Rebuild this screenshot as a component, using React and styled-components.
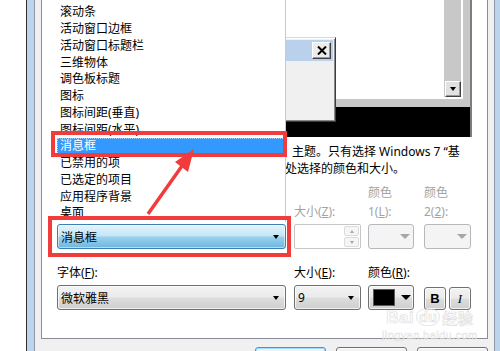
import React from "react";
import styled, { createGlobalStyle, css } from "styled-components";

const Global = createGlobalStyle`
  html, body { margin: 0; padding: 0; background: #fff; }
  body {
    font-family: "Noto Sans", "Noto Sans CJK SC", sans-serif;
    font-size: 12px;
    color: #000;
  }
  * { box-sizing: border-box; }
`;

const Screen = styled.div`
  position: relative;
  width: 500px;
  height: 351px;
  overflow: hidden;
  background: #fff;
  display: flex;
  padding-left: 26px;
`;

const WindowFrame = styled.div`
  flex-shrink: 0;
  display: flex;
  height: 100%;
  border-left: 1px solid #2e2e2e;
  border-right: 1px solid #2e2e2e;
  background: #bcd4ec;
  padding: 0 7px;
`;

const DialogBody = styled.div`
  display: flex;
  flex-direction: column;
  border-left: 1px solid #8d99a8;
  border-right: 1px solid #8d99a8;
  background: #f0f0f0;
  padding: 0 6px;
`;

const Panel = styled.div`
  width: 447px;
  display: flex;
  flex-direction: column;
  background: #fff;
  border: 1px solid #898c95;
  border-top: none;
  padding: 0 15px 28px;
`;

/* ---------- preview ---------- */
const PreviewBox = styled.div`
  position: relative;
  flex-shrink: 0;
  height: 137px;
  background: #000;
  border-right: 2px solid #7d7d7d;
  overflow: hidden;
`;

const PreviewWindow = styled.div`
  position: absolute;
  left: 24px;
  top: -60px;
  right: 0;
  bottom: 30px;
  display: flex;
  background: #c8c8c8;
  padding: 8px 7px 8px 8px;
`;

const WindowInner = styled.div`
  flex: 1;
  display: flex;
  border-right: 2px solid #fff;
  border-bottom: 2px solid #fff;
`;

const ClientArea = styled.div`
  flex: 1;
  background: #fff;
`;

const Scrollbar = styled.div`
  width: 17px;
  display: flex;
  flex-direction: column;
  justify-content: flex-end;
  background: #c8c8c8;
  padding-left: 1px;
`;

const ScrollButton = styled.div`
  height: 16px;
  display: flex;
  align-items: center;
  justify-content: center;
  background: #e2e2e2;
  border: 1px solid;
  border-color: #fff #404040 #404040 #fff;
  box-shadow: inset -1px -1px #9a9a9a;
`;

const MessageBox = styled.div`
  position: absolute;
  top: 37px;
  right: 134px;
  width: 150px;
  height: 85px;
  display: flex;
  flex-direction: column;
  background: #f0f0f0;
  border: 1px solid;
  border-color: #dadada #3c3c3c #3c3c3c #dadada;
  box-shadow: inset 1px 1px #fff, inset -1px -1px #8a8a8a;
  padding: 2px;
`;

const TitleBar = styled.div`
  height: 21px;
  display: flex;
  align-items: center;
  justify-content: flex-end;
  background: #b9d1ea;
  padding: 0 2px 0 4px;
`;

const CloseBox = styled.div`
  width: 19px;
  height: 17px;
  display: flex;
  align-items: center;
  justify-content: center;
  background: #ececec;
  border: 1px solid;
  border-color: #fff #404040 #404040 #fff;
  box-shadow: inset -1px -1px #9a9a9a;
`;

const MsgBody = styled.div`
  flex: 1;
`;

/* ---------- description ---------- */
const Description = styled.div`
  margin-top: 6px;
  line-height: 17px;
`;

const DescLine = styled.div`
  height: 17px;
  white-space: nowrap;
  overflow: hidden;
  padding-left: ${(p) => p.$lead}px;
`;

/* ---------- controls ---------- */
const ControlRow = styled.div`
  display: grid;
  grid-template-columns: 237px 74px 56px 47px;
  align-items: end;
  margin-top: ${(p) => p.$gap}px;
`;

const Field = styled.div`
  display: flex;
  flex-direction: column;
  gap: 3px;
`;

const Label = styled.div`
  line-height: 19px;
  white-space: nowrap;
  color: ${(p) => (p.$disabled ? "#a3a3a3" : "#000")};
  u { text-underline-offset: 1px; }
`;

const grayFace = css`
  border: 1px solid #707070;
  background: linear-gradient(#f3f3f3 0%, #ebebeb 48%, #dddddd 52%, #cfcfcf 100%);
  box-shadow: inset 0 0 0 1px rgba(255, 255, 255, 0.7);
`;

const comboVariants = {
  focus: css`
    border: 1px solid #3c7fb1;
    background: linear-gradient(#e5f4fc 0%, #c4e5f6 48%, #98d1ef 52%, #6fb6de 100%);
    box-shadow: inset 0 0 0 1px rgba(255, 255, 255, 0.5);
  `,
  normal: grayFace,
  disabled: css`
    border: 1px solid #b6b9bc;
    background: #f4f4f4;
  `,
};

const Combo = styled.div`
  position: relative;
  width: ${(p) => p.$width}px;
  height: 25px;
  display: flex;
  align-items: center;
  justify-content: space-between;
  padding: 0 ${(p) => p.$padRight ?? 6}px 0 3px;
  border-radius: 3px;
  ${(p) => comboVariants[p.$variant || "normal"]}
`;

const Tri = styled.span`
  display: block;
  width: 0;
  height: 0;
  border-left: ${(p) => p.$w / 2}px solid transparent;
  border-right: ${(p) => p.$w / 2}px solid transparent;
  ${(p) => (p.$up ? "border-bottom" : "border-top")}: ${(p) => p.$h}px solid
    ${(p) => p.$color || "#000"};
`;

const DropList = styled.ul`
  position: absolute;
  left: -1px;
  bottom: calc(100% + 3px);
  width: 229px;
  margin: 0;
  padding: 6px 0 0;
  list-style: none;
  background: #fff;
  border-right: 1px solid #c7c9d3;
  z-index: 5;
`;

const DropItem = styled.li`
  height: 16.75px;
  line-height: 16.75px;
  padding-left: 3px;
  white-space: nowrap;
  ${(p) =>
    p.$selected &&
    css`
      background: #3399ff;
      color: #fff;
      outline: 1px dotted rgba(255, 255, 255, 0.55);
      outline-offset: -1px;
    `}
`;

const SpinBox = styled.div`
  width: 67px;
  height: 25px;
  display: flex;
  justify-content: flex-end;
  background: #fff;
  border: 1px solid #c4c6c9;
  border-radius: 2px;
  padding: 1px;
`;

const SpinButtons = styled.div`
  width: 15px;
  display: flex;
  flex-direction: column;
  gap: 1px;
`;

const SpinBtn = styled.div`
  flex: 1;
  display: flex;
  align-items: center;
  justify-content: center;
  background: #f5f5f5;
  border: 1px solid #dcdcdc;
  border-radius: 2px;
`;

const ColorButton = styled.div`
  width: 46px;
  height: 25px;
  display: flex;
  align-items: center;
  justify-content: space-between;
  padding: 0 2px 0 4px;
  border-radius: 3px;
  ${grayFace}
`;

const Swatch = styled.span`
  width: 22px;
  height: 17px;
  background: #000;
  border: 1px solid #5a5a5a;
`;

const ToggleGroup = styled.div`
  display: flex;
  gap: 3px;
`;

const ToolButton = styled.div`
  width: 22px;
  height: 23px;
  display: flex;
  align-items: center;
  justify-content: center;
  border-radius: 3px;
  ${grayFace}
  font-family: ${(p) => (p.$italic ? '"Liberation Serif", serif' : '"Liberation Sans", sans-serif')};
  font-weight: ${(p) => (p.$italic ? 400 : 700)};
  font-style: ${(p) => (p.$italic ? "italic" : "normal")};
  font-size: 13px;
`;

/* ---------- dialog buttons ---------- */
const ButtonRow = styled.div`
  display: flex;
  justify-content: flex-end;
  gap: 10px;
  margin-top: 8px;
`;

const DialogButton = styled.div`
  width: 71px;
  height: 23px;
  flex-shrink: 0;
  display: flex;
  align-items: center;
  justify-content: center;
  border-radius: 3px;
  ${grayFace}
  ${(p) =>
    p.$default &&
    css`
      border-color: #3399ff;
      box-shadow: inset 0 0 0 1px #9fdcff;
    `}
`;

/* ---------- overlays: annotation + watermark ---------- */
const RedMark = styled.div`
  position: absolute;
  left: ${(p) => p.$x}px;
  top: ${(p) => p.$y}px;
  width: ${(p) => p.$w}px;
  height: ${(p) => p.$h}px;
  border: 4px solid #f23c3c;
  z-index: 10;
`;

const ArrowSvg = styled.svg`
  position: absolute;
  left: 140px;
  top: 144px;
  z-index: 10;
`;

const Watermark = styled.div`
  position: absolute;
  left: 382px;
  top: 308px;
  display: flex;
  flex-direction: column;
  align-items: center;
  color: #fff;
  z-index: 8;
  opacity: 0.8;
`;

const WmBrand = styled.div`
  display: flex;
  align-items: center;
  font-family: "Liberation Sans", sans-serif;
  font-weight: 700;
  font-size: 17px;
  line-height: 19px;
  -webkit-text-stroke: 0.7px #d8d8d8;
  letter-spacing: 0.5px;
`;

const WmPaw = styled.span`
  border: 1.5px solid #e0e0e0;
  border-radius: 8px 8px 10px 10px;
  padding: 0 2px;
  margin: 0 2px;
  font-size: 14px;
  line-height: 15px;
`;

const WmCjk = styled.span`
  font-family: "Noto Sans CJK SC", sans-serif;
  font-size: 15px;
`;

const WmUrl = styled.div`
  font-family: "Liberation Sans", sans-serif;
  font-size: 11px;
  line-height: 12px;
  letter-spacing: 0.4px;
  color: #fff;
  -webkit-text-stroke: 0.5px #dadada;
  margin-top: 2px;
`;

const items = [
  "滚动条",
  "活动窗口边框",
  "活动窗口标题栏",
  "三维物体",
  "调色板标题",
  "图标",
  "图标间距(垂直)",
  "图标间距(水平)",
  "消息框",
  "已禁用的项",
  "已选定的项目",
  "应用程序背景",
  "桌面",
];

export default function App() {
  return (
    <>
      <Global />
      <Screen>
        <WindowFrame>
          <DialogBody>
            <Panel>
              <PreviewBox>
                <PreviewWindow>
                  <WindowInner>
                    <ClientArea />
                    <Scrollbar>
                      <ScrollButton>
                        <Tri $w={7} $h={4} />
                      </ScrollButton>
                    </Scrollbar>
                  </WindowInner>
                </PreviewWindow>
                <MessageBox>
                  <TitleBar>
                    <CloseBox>
                      <svg width="10" height="9" viewBox="0 0 10 9">
                        <path d="M1 0.5 L9 8.5 M9 0.5 L1 8.5" stroke="#000" strokeWidth="2" />
                      </svg>
                    </CloseBox>
                  </TitleBar>
                  <MsgBody />
                </MessageBox>
              </PreviewBox>

              <Description>
                <DescLine $lead={235}>主题。只有选择 Windows 7 “基</DescLine>
                <DescLine $lead={228}>处选择的颜色和大小。</DescLine>
              </Description>

              <ControlRow $gap={6}>
                <Field>
                  <Combo $width={229} $variant="focus" $padRight={6}>
                    <span>消息框</span>
                    <Tri $w={7} $h={4} />
                    <DropList>
                      {items.map((it) => (
                        <DropItem key={it} $selected={it === "消息框"}>
                          {it}
                        </DropItem>
                      ))}
                    </DropList>
                  </Combo>
                </Field>
                <Field>
                  <Label $disabled>
                    大小(<u>Z</u>):
                  </Label>
                  <SpinBox>
                    <SpinButtons>
                      <SpinBtn>
                        <Tri $w={5} $h={3} $up $color="#a8a8a8" />
                      </SpinBtn>
                      <SpinBtn>
                        <Tri $w={5} $h={3} $color="#a8a8a8" />
                      </SpinBtn>
                    </SpinButtons>
                  </SpinBox>
                </Field>
                <Field>
                  <Label $disabled>
                    颜色
                    <br />
                    1(<u>L</u>):
                  </Label>
                  <Combo $width={46} $variant="disabled" $padRight={3}>
                    <span />
                    <Tri $w={10} $h={5} $color="#a6a6a6" />
                  </Combo>
                </Field>
                <Field>
                  <Label $disabled>
                    颜色
                    <br />
                    2(<u>2</u>):
                  </Label>
                  <Combo $width={47} $variant="disabled" $padRight={3}>
                    <span />
                    <Tri $w={10} $h={5} $color="#a6a6a6" />
                  </Combo>
                </Field>
              </ControlRow>

              <ControlRow $gap={14}>
                <Field>
                  <Label>
                    字体(<u>F</u>):
                  </Label>
                  <Combo $width={229}>
                    <span>微软雅黑</span>
                    <Tri $w={7} $h={4} />
                  </Combo>
                </Field>
                <Field>
                  <Label>
                    大小(<u>E</u>):
                  </Label>
                  <Combo $width={67}>
                    <span>9</span>
                    <Tri $w={7} $h={4} />
                  </Combo>
                </Field>
                <Field>
                  <Label>
                    颜色(<u>R</u>):
                  </Label>
                  <ColorButton>
                    <Swatch />
                    <Tri $w={10} $h={5} />
                  </ColorButton>
                </Field>
                <Field>
                  <ToggleGroup>
                    <ToolButton>B</ToolButton>
                    <ToolButton $italic>I</ToolButton>
                  </ToggleGroup>
                </Field>
              </ControlRow>
            </Panel>

            <ButtonRow>
              <DialogButton $default>确定</DialogButton>
              <DialogButton>取消</DialogButton>
              <DialogButton>应用(A)</DialogButton>
            </ButtonRow>
          </DialogBody>
        </WindowFrame>

        <RedMark $x={51} $y={131} $w={236} $h={26} />
        <RedMark $x={48} $y={216} $w={243} $h={41} />
        <ArrowSvg width="60" height="76" viewBox="140 144 60 76">
          <line x1="148" y1="214" x2="182" y2="166" stroke="#f23c3c" strokeWidth="3.5" />
          <polygon points="194,149 188,172 175,162" fill="#f23c3c" />
        </ArrowSvg>

        <Watermark>
          <WmBrand>
            Bai<WmPaw>du</WmPaw>
            <WmCjk>经验</WmCjk>
          </WmBrand>
          <WmUrl>jingyan.baidu.com</WmUrl>
        </Watermark>
      </Screen>
    </>
  );
}
